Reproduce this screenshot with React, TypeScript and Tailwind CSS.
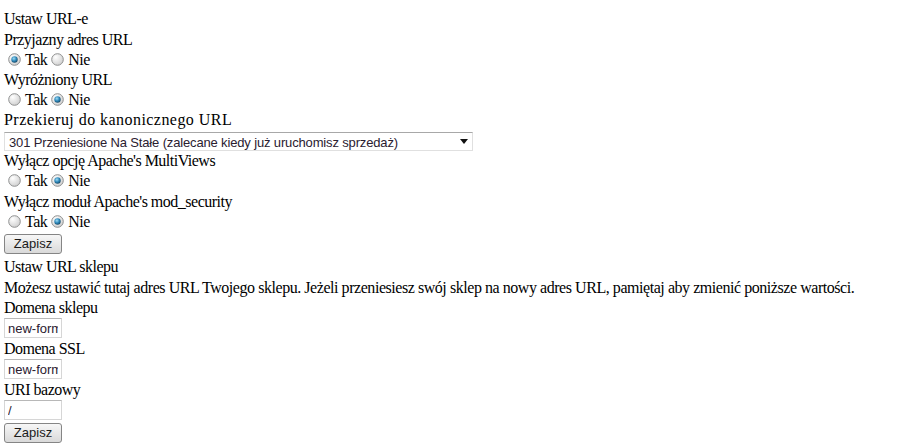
import React from "react";

const serif = { fontFamily: '"Liberation Serif", "Times New Roman", serif' };
const sans = { fontFamily: '"Liberation Sans", Arial, sans-serif' };

function Radio({ checked }: { checked: boolean }) {
  return (
    <span className="inline-block w-[13px] h-[13px] ml-[4px] mr-[4px] align-[-1px]">
      <svg width="13" height="13" viewBox="0 0 13 13">
        <defs>
          <radialGradient id="rgbg" cx="0.35" cy="0.3" r="0.75">
            <stop offset="0" stopColor="#ffffff" />
            <stop offset="1" stopColor="#cfcfcf" />
          </radialGradient>
          <radialGradient id="dot" cx="0.4" cy="0.35" r="0.7">
            <stop offset="0" stopColor="#9fdcf5" />
            <stop offset="0.55" stopColor="#2c86b8" />
            <stop offset="1" stopColor="#16435f" />
          </radialGradient>
        </defs>
        <circle cx="6.5" cy="6.5" r="5.8" fill="url(#rgbg)" stroke="#8f9090" strokeWidth="1" />
        {checked && <circle cx="6.5" cy="6.5" r="3.2" fill="url(#dot)" />}
      </svg>
    </span>
  );
}

function RadioRow({ yes }: { yes: boolean }) {
  return (
    <div className="h-[20px] leading-[20px] whitespace-nowrap">
      <Radio checked={yes} />
      <span>Tak</span>
      <Radio checked={!yes} />
      <span>Nie</span>
    </div>
  );
}

function Line({ children, className = "" }: { children: React.ReactNode; className?: string }) {
  return <div className={`h-[20px] leading-[20px] whitespace-nowrap ${className}`}>{children}</div>;
}

function Button() {
  return (
    <button
      className="block w-[58px] h-[20px] rounded-[3px] border border-[#858585] bg-gradient-to-b from-[#f7f7f7] to-[#d9d9d9] text-[13px] tracking-normal text-[#1a1a1a] leading-[18px] text-center"
      style={sans}
    >
      Zapisz
    </button>
  );
}

function TextInput({ value }: { value: string }) {
  return (
    <input
      readOnly
      value={value}
      className="block w-[58px] h-[20px] border border-[#d6d6d6] border-t-[#b8b8b8] bg-white px-[3px] text-[13px] tracking-normal text-[#2a2030] outline-none"
      style={sans}
    />
  );
}

export default function App() {
  return (
    <div
      className="w-[910px] h-[447px] bg-white text-[16px] tracking-[-0.5px] text-black pt-[9px] pl-[4px] overflow-hidden"
      style={serif}
    >
      <Line>Ustaw URL-e</Line>
      <div className="h-[1px]" />
      <Line>Przyjazny adres URL</Line>
      <RadioRow yes={true} />
      <Line>Wyróżniony URL</Line>
      <RadioRow yes={false} />
      <Line className="tracking-[0.45px]">Przekieruj do kanonicznego URL</Line>
      <div className="relative w-[469px] h-[19px] mt-[2px]">
        <select
          className="appearance-none block w-full h-full border border-[#e0e0e0] border-t-[#a8a8a8] bg-white pl-[4px] text-[13px] tracking-[-0.15px] text-[#2a2030] outline-none"
          style={sans}
          defaultValue="301"
        >
          <option value="301">301 Przeniesione Na Stałe (zalecane kiedy już uruchomisz sprzedaż)</option>
        </select>
        <svg className="absolute right-[5px] top-[7px] pointer-events-none" width="8" height="5" viewBox="0 0 8 5">
          <path d="M0 0 H8 L4 5 Z" fill="#111" />
        </svg>
      </div>
      <Line>Wyłącz opcję Apache's MultiViews</Line>
      <RadioRow yes={false} />
      <div className="h-[1px]" />
      <Line>Wyłącz moduł Apache's mod_security</Line>
      <RadioRow yes={false} />
      <div className="mt-[2px]">
        <Button />
      </div>
      <div className="h-[3px]" />
      <Line>Ustaw URL sklepu</Line>
      <div className="h-[1px]" />
      <Line className="tracking-[-0.45px]">
        Możesz ustawić tutaj adres URL Twojego sklepu. Jeżeli przeniesiesz swój sklep na nowy adres URL, pamiętaj aby zmienić poniższe wartości.
      </Line>
      <Line>Domena sklepu</Line>
      <TextInput value="new-format.pl" />
      <div className="h-[1px]" />
      <Line>Domena SSL</Line>
      <TextInput value="new-format.pl" />
      <div className="h-[1px]" />
      <Line>URI bazowy</Line>
      <TextInput value="/" />
      <div className="h-[3px]" />
      <Button />
    </div>
  );
}
